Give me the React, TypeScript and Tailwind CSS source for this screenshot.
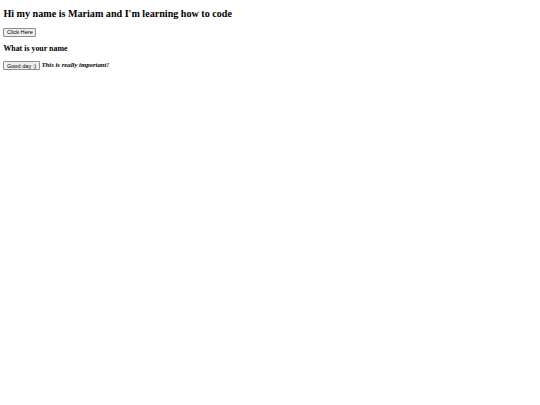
import React from "react"

// page is drawn at 0.421875 of a 1280px wide default-styled document
const btn =
  "inline-block align-baseline bg-[#efefef] border-[0.84px] border-solid border-[#8f8f8f] rounded-[1px] px-[2.53px] py-[0.42px] text-[5.625px] leading-[normal] text-black font-['Liberation_Sans',Arial,sans-serif]"

export default function App() {
  return (
    <div className="min-h-screen bg-white px-[3.375px] pt-[8.4px] text-black font-['Liberation_Serif','Times_New_Roman',serif] text-[6.75px] leading-[normal]">
      <h2 className="text-[10.125px] font-bold leading-[normal] mb-[8.4px]">
        Hi my name is Mariam and I'm learning how to code
      </h2>
      <div>
        <button className={btn}>Click Here</button>
      </div>
      <h3 className="text-[7.9px] font-bold leading-[normal] my-[7.9px]">What is your name</h3>
      <div>
        <button className={btn}>Good day :)</button>{" "}
        <b>
          <i>This is really important!</i>
        </b>
      </div>
    </div>
  )
}
